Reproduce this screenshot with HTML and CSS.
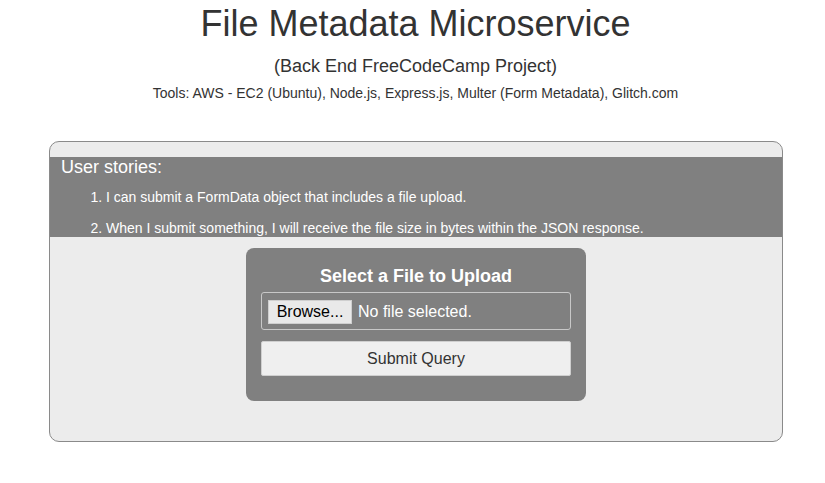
FILE: index.html
```html
<!DOCTYPE html>
<html>
<head>
<meta charset="utf-8">
<title>File Metadata Microservice</title>
<link rel="stylesheet" href="styles.css">
</head>
<body>
<header class="head">
  <h1 class="title">File Metadata Microservice</h1>
  <h2 class="subtitle">(Back End FreeCodeCamp Project)</h2>
  <p class="tools">Tools: AWS - EC2 (Ubuntu), Node.js, Express.js, Multer (Form Metadata), Glitch.com</p>
</header>
<main class="panel">
  <section class="stories">
    <h3 class="stories-title">User stories:</h3>
    <ol class="stories-list">
      <li>I can submit a FormData object that includes a file upload.</li>
      <li>When I submit something, I will receive the file size in bytes within the JSON response.</li>
    </ol>
  </section>
  <form class="upload">
    <h4 class="upload-title">Select a File to Upload</h4>
    <div class="file-field">
      <button type="button" class="browse">Browse...</button>
      <span class="file-name">No file selected.</span>
    </div>
    <button type="button" class="submit">Submit Query</button>
  </form>
</main>
</body>
</html>
```
FILE: styles.css
```css
html, body {
  margin: 0;
  padding: 0;
  background: #fff;
}
body {
  font-family: "Liberation Sans", Arial, sans-serif;
  color: #333;
  width: 825px;
}
.head {
  text-align: center;
  padding-left: 6px;
}
.title {
  margin: 4px 0 0;
  font-size: 36px;
  font-weight: normal;
  line-height: 40px;
}
.subtitle {
  margin: 12px 0 0;
  font-size: 18px;
  font-weight: normal;
  line-height: 20px;
}
.tools {
  margin: 7px 0 0;
  font-size: 14px;
  line-height: 20px;
}
.panel {
  margin: 38px 0 0 49px;
  width: 732px;
  height: 284px;
  border: 1px solid #8a8a8a;
  border-radius: 10px;
  background: #ececec;
  padding-top: 15px;
  box-sizing: content-box;
  overflow: hidden;
}
.stories {
  background: #808080;
  color: #fff;
  height: 80px;
  padding: 0 11px;
}
.stories-title {
  margin: 0;
  font-size: 18px;
  font-weight: normal;
  line-height: 20px;
}
.stories-list {
  margin: 0;
  padding-left: 45px;
  font-size: 14px;
}
.stories-list li {
  line-height: 20px;
  margin-top: 10px;
}
.stories-list li + li {
  margin-top: 11px;
}
.upload {
  margin: 11px auto 0;
  width: 310px;
  padding: 16px 15px 25px;
  background: #808080;
  border-radius: 8px;
}
.upload-title {
  margin: 0;
  text-align: center;
  color: #fff;
  font-size: 18px;
  font-weight: bold;
  line-height: 24px;
}
.file-field {
  margin-top: 4px;
  height: 36px;
  border: 1px solid #c8c8c8;
  border-radius: 3px;
  display: flex;
  align-items: center;
  padding: 0 6px;
  gap: 6px;
}
.browse {
  font-family: "Liberation Sans", Arial, sans-serif;
  font-size: 16px;
  color: #000;
  background: #e9e9e9;
  border: 1px solid #cfcfcf;
  height: 24px;
  width: 84px;
  padding: 0;
  margin: 2px 0 0;
}
.file-name {
  color: #fff;
  font-size: 16px;
  margin-top: 2px;
}
.submit {
  display: block;
  margin-top: 11px;
  width: 310px;
  height: 35px;
  background: #efefef;
  border: 1px solid #cfcfcf;
  border-radius: 2px;
  font-family: "Liberation Sans", Arial, sans-serif;
  font-size: 16px;
  color: #333;
  padding: 0;
}
```
